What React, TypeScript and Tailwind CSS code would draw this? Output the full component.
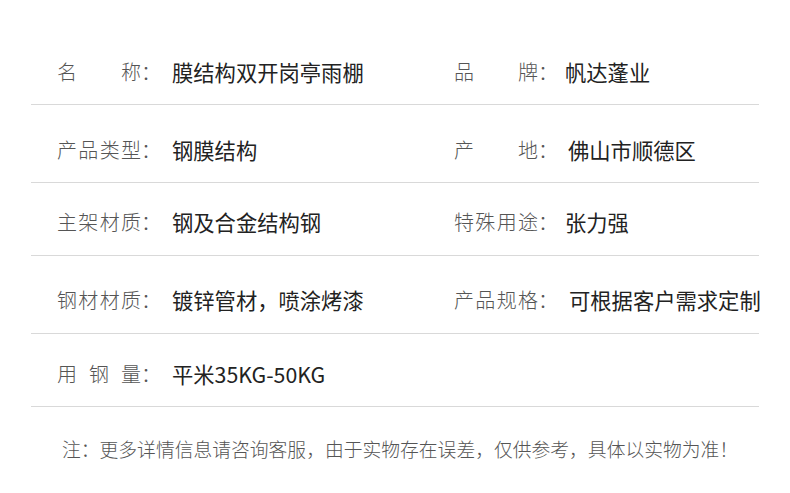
const font = { fontFamily: '"Noto Sans CJK SC", "Noto Sans", sans-serif' };

type Cell = { label: string; value: string; gap: string };

const rows: { cells: Cell[]; cls: string }[] = [
  {
    cls: "h-[105px] pt-[58px]",
    cells: [
      { label: "名称", value: "膜结构双开岗亭雨棚", gap: "pl-[4px]" },
      { label: "品牌", value: "帆达蓬业", gap: "pl-0" },
    ],
  },
  {
    cls: "h-[78px] pt-[31px]",
    cells: [
      { label: "产品类型", value: "钢膜结构", gap: "pl-[4px]" },
      { label: "产地", value: "佛山市顺德区", gap: "pl-[3px]" },
    ],
  },
  {
    cls: "h-[73px] pt-[25px]",
    cells: [
      { label: "主架材质", value: "钢及合金结构钢", gap: "pl-[4px]" },
      { label: "特殊用途", value: "张力强", gap: "pl-0" },
    ],
  },
  {
    cls: "h-[78px] pt-[30px]",
    cells: [
      { label: "钢材材质", value: "镀锌管材，喷涂烤漆", gap: "pl-[4px]" },
      { label: "产品规格", value: "可根据客户需求定制", gap: "pl-[4px]" },
    ],
  },
  {
    cls: "h-[73px] pt-[26px]",
    cells: [{ label: "用钢量", value: "平米35KG-50KG", gap: "pl-[4px]" }],
  },
];

function Field({ cell }: { cell: Cell }) {
  return (
    <div className="flex items-center leading-[28px]">
      <span className="w-[84px] text-[20px] font-light text-[#555] [text-align-last:justify]">
        {cell.label}
      </span>
      <span className="w-[27px] text-[20px] font-light text-[#555]">：</span>
      <span className={`text-[21.3px] text-[#222] whitespace-nowrap ${cell.gap}`}>
        {cell.value}
      </span>
    </div>
  );
}

export default function App() {
  return (
    <div className="w-[790px] h-[493px] bg-white overflow-hidden" style={font}>
      <div className="mx-[31px]">
        {rows.map((row, i) => (
          <div
            key={i}
            className={`border-b border-[#d9d9d9] pl-[26px] grid grid-cols-[397px_1fr] items-start content-start ${row.cls}`}
          >
            {row.cells.map((c, j) => (
              <Field key={j} cell={c} />
            ))}
          </div>
        ))}
      </div>
      <p className="pl-[62px] pt-[28px] text-[18.8px] leading-[28px] font-light text-[#555]">
        注：更多详情信息请咨询客服，由于实物存在误差，仅供参考，具体以实物为准！
      </p>
    </div>
  );
}
